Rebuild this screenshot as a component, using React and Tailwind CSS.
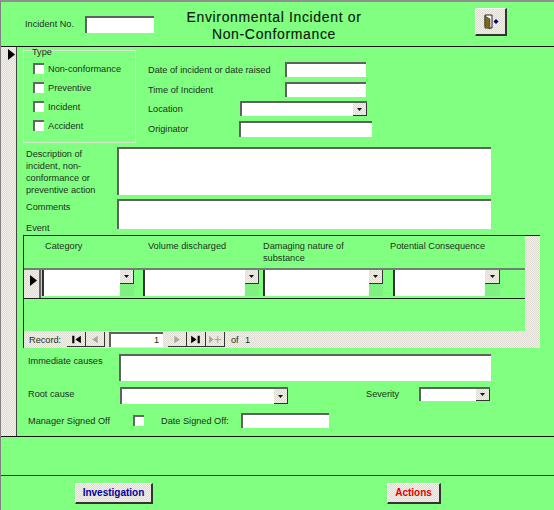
const beige = "bg-[repeating-conic-gradient(#dedbd2_0_25%,#f2f0e8_0_50%)] bg-[length:2px_2px]";

function Box({ className = "" }) {
  return <div className={"shrink-0 bg-white border-t-2 border-l-2 border-t-[#5c625c] border-l-[#5c625c] " + className} />;
}

function Arrow({ className = "" }) {
  return (
    <svg width="5" height="3" viewBox="0 0 5 3" className={className}>
      <path d="M0 0h5L2.500 3z" fill="#111" />
    </svg>
  );
}

function DropBtn({ className = "" }) {
  return (
    <div className={"shrink-0 flex items-center justify-center border-r border-b border-r-[#333] border-b-[#333] " + beige + " " + className}>
      <Arrow />
    </div>
  );
}

function Combo({ className = "", btn = "w-[14px]" }) {
  return (
    <div className={"shrink-0 flex justify-end bg-white border-t-2 border-l-2 border-t-[#5c625c] border-l-[#5c625c] " + className}>
      <DropBtn className={btn} />
    </div>
  );
}

function Check({ label }) {
  return (
    <div className="flex items-center h-[19px]">
      <div className="w-[11px] h-[11px] ml-[9px] bg-white border-t-2 border-l-2 border-t-[#666] border-l-[#666]" />
      <span className="ml-[4px]">{label}</span>
    </div>
  );
}

function Selector({ className = "" }) {
  return (
    <svg width="7" height="11" viewBox="0 0 7 11" className={className}>
      <path d="M0 0l7 5.500L0 11z" fill="#000" />
    </svg>
  );
}

function Field({ label, labelW, children, className = "" }) {
  return (
    <div className={"flex items-center " + className}>
      <span className={"shrink-0 " + labelW}>{label}</span>
      {children}
    </div>
  );
}

function NavBtn({ d, dim, className = "" }) {
  return (
    <div className={"shrink-0 h-[15px] flex items-center justify-center border-r border-b border-r-[#333] border-b-[#333] " + className}>
      <svg width="14" height="11" viewBox="0 0 13 9">
        <path d={d} fill={dim ? "#a8a69e" : "#000"} />
      </svg>
    </div>
  );
}

function GridCell({ w, combo, ml }) {
  return (
    <div className={"shrink-0 flex h-[26px] bg-white border-l-2 border-l-[#333] " + w + " " + ml}>
      <div className="flex-1" />
      <div className={"flex flex-col " + combo}>
        <DropBtn className="h-[14px] w-full" />
        <div className="flex-1 bg-[#80f080]" />
      </div>
    </div>
  );
}

export default function App() {
  return (
    <div className="w-[554px] h-[510px] overflow-hidden bg-[#80ff80] text-[9.2px] leading-[12px] text-[#203020] border-t-2 border-t-[#909090] border-l border-l-[#808080] font-['Liberation_Sans',sans-serif]">
      {/* form header */}
      <div className="h-[45px] flex items-start border-b border-b-[#111]">
        <span className="ml-[24px] mt-[16px] w-[60px]">Incident No.</span>
        <Box className="w-[69px] h-[17px] mt-[14px]" />
        <h1 className="w-[240px] mt-[7px] text-center text-[14px] leading-[17px] text-[#101810] tracking-[0.65px] [-webkit-text-stroke:0.15px_#101810]">
          Environmental Incident or
          <br />
          Non-Conformance
        </h1>
        <div className={"w-[32px] h-[28px] ml-[81px] mt-[6px] flex items-center justify-center border-t border-l border-t-white border-l-white border-r-2 border-b-2 border-r-[#333] border-b-[#333] " + beige}>
          <svg width="16" height="16" viewBox="0 0 16 16">
            <path d="M2 1h7v13H2z" fill="#fff" stroke="#222" />
            <path d="M2 2l5 3v10l-5-3z" fill="#7a6a20" stroke="#403810" strokeWidth="0.6" />
            <path d="M13 5l2.500 2.500L13 10l-2.500-2.500z" fill="#000080" />
          </svg>
        </div>
      </div>

      {/* detail section */}
      <div className="h-[390px] flex border-b border-b-[#111]">
        <div className={"w-[16px] shrink-0 border-r border-r-[#444] pl-[7px] pt-[2px] " + beige}>
          <Selector />
        </div>
        <div className="flex-1 min-w-0">
          <div className="flex h-[99px]">
            <div className="w-[113px] h-[93px] ml-[6px] mt-[3px] border border-[#d4e8cc] shrink-0">
              <div className="ml-[8px] h-[9px] leading-[9px] -mt-[3px] pt-0">Type</div>
              <div className="mt-[2px]">
                <Check label="Non-conformance" />
                <Check label="Preventive" />
                <Check label="Incident" />
                <Check label="Accident" />
              </div>
            </div>
            <div className="ml-[12px] pt-[15px] flex flex-col">
              <Field label="Date of incident or date raised" labelW="w-[137px]" className="h-[15px]">
                <Box className="w-[81px] h-[15px]" />
              </Field>
              <Field label="Time of Incident" labelW="w-[137px]" className="h-[15px] mt-[5px]">
                <Box className="w-[81px] h-[15px]" />
              </Field>
              <Field label="Location" labelW="w-[92px]" className="h-[15px] mt-[4px]">
                <Combo className="w-[127px] h-[15px]" />
              </Field>
              <Field label="Originator" labelW="w-[91px]" className="h-[16px] mt-[5px]">
                <Box className="w-[133px] h-[16px]" />
              </Field>
            </div>
          </div>

          <div className="flex ml-[9px] mt-[1px]">
            <p className="w-[91px] pt-[1px] pr-[8px]">
              Description of incident, non-conformance or preventive action
            </p>
            <Box className="w-[374px] h-[48px]" />
          </div>
          <div className="flex ml-[9px] mt-[3px]">
            <p className="w-[91px] pt-[2px]">Comments</p>
            <Box className="w-[374px] h-[30px]" />
          </div>

          <div className="ml-[9px] h-[12px] leading-[10px] -mt-[6px]">Event</div>

          {/* Event subform */}
          <div className="ml-[6px] w-[517px] h-[113px] flex flex-col border-t border-l border-t-[#222] border-l-[#222]">
            <div className="flex-1 flex min-h-0">
              <div className="w-[501px] flex flex-col">
                <div className="h-[34px] flex border-b-2 border-b-[#708070] pt-[4px] shrink-0">
                  <span className="ml-[21px] w-[103px]">Category</span>
                  <span className="w-[115px]">Volume discharged</span>
                  <span className="w-[127px] pr-[30px]">Damaging nature of substance</span>
                  <span>Potential Consequence</span>
                </div>
                <div className="h-[29px] flex items-start border-b border-b-[#222] shrink-0">
                  <div className={"w-[17px] h-full shrink-0 border-r-2 border-r-[#666] pl-[6px] pt-[5px] " + beige}>
                    <Selector />
                  </div>
                  <GridCell w="w-[92px]" combo="w-[14px]" ml="ml-[1px]" />
                  <GridCell w="w-[116px]" combo="w-[14px]" ml="ml-[9px]" />
                  <GridCell w="w-[120px]" combo="w-[14px]" ml="ml-[4px]" />
                  <GridCell w="w-[107px]" combo="w-[15px]" ml="ml-[10px]" />
                </div>
              </div>
              <div className="flex-1" />
              <div className={"w-[15px] " + beige} />
            </div>
            <div className={"h-[17px] shrink-0 flex items-center pl-[5px] " + beige}>
              <span className="w-[38px]">Record:</span>
              <NavBtn className="w-[19px]" d="M3 1h2v7H3zM11 1v7L6 4.500z" />
              <NavBtn className="w-[19px]" dim d="M9 1v7L4 4.500z" />
              <Box className="w-[54px] h-[15px] ml-[4px]" />
              <span className="-ml-[9px] w-[9px] relative">1</span>
              <NavBtn className="w-[19px] ml-[5px]" dim d="M4 1v7l5-3.500z" />
              <NavBtn className="w-[19px]" d="M2 1v7l5-3.500zM8 1h2v7H8z" />
              <NavBtn className="w-[19px]" dim d="M1 1v7l4-3.500zM6 4h6v1H6zM8.500 1.500h1v6h-1z" />
              <span className="ml-[6px] w-[14px]">of</span>
              <span>1</span>
            </div>
          </div>

          <div className="flex ml-[11px] mt-[6px]">
            <p className="w-[91px] pt-[1px]">Immediate causes</p>
            <Box className="w-[372px] h-[27px]" />
          </div>
          <div className="flex items-start ml-[11px] mt-[6px] h-[17px]">
            <span className="w-[92px] pt-[1px]">Root cause</span>
            <Combo className="w-[168px] h-[17px]" />
            <span className="ml-[78px] w-[53px] pt-[1px]">Severity</span>
            <Combo className="w-[71px] h-[14px]" />
          </div>
          <div className="flex items-center ml-[11px] mt-[9px] h-[15px]">
            <span className="w-[105px]">Manager Signed Off</span>
            <div className="w-[11px] h-[11px] bg-white border-t-2 border-l-2 border-t-[#666] border-l-[#666]" />
            <span className="ml-[17px] w-[80px]">Date Signed Off:</span>
            <Box className="w-[88px] h-[15px]" />
          </div>
        </div>
      </div>

      {/* empty strip */}
      <div className="h-[39px] border-b border-b-[#333]" />

      {/* form footer */}
      <div className="flex items-start pt-[7px] text-[10px]">
        <button className={"ml-[74px] w-[78px] h-[21px] text-[#0000a0] font-bold border-t border-l border-t-white border-l-white border-r-2 border-b-2 border-r-[#333] border-b-[#333] " + beige}>
          Investigation
        </button>
        <button className={"ml-[234px] w-[54px] h-[21px] text-[#e00000] font-bold border-t border-l border-t-white border-l-white border-r-2 border-b-2 border-r-[#333] border-b-[#333] " + beige}>
          Actions
        </button>
      </div>
    </div>
  );
}
